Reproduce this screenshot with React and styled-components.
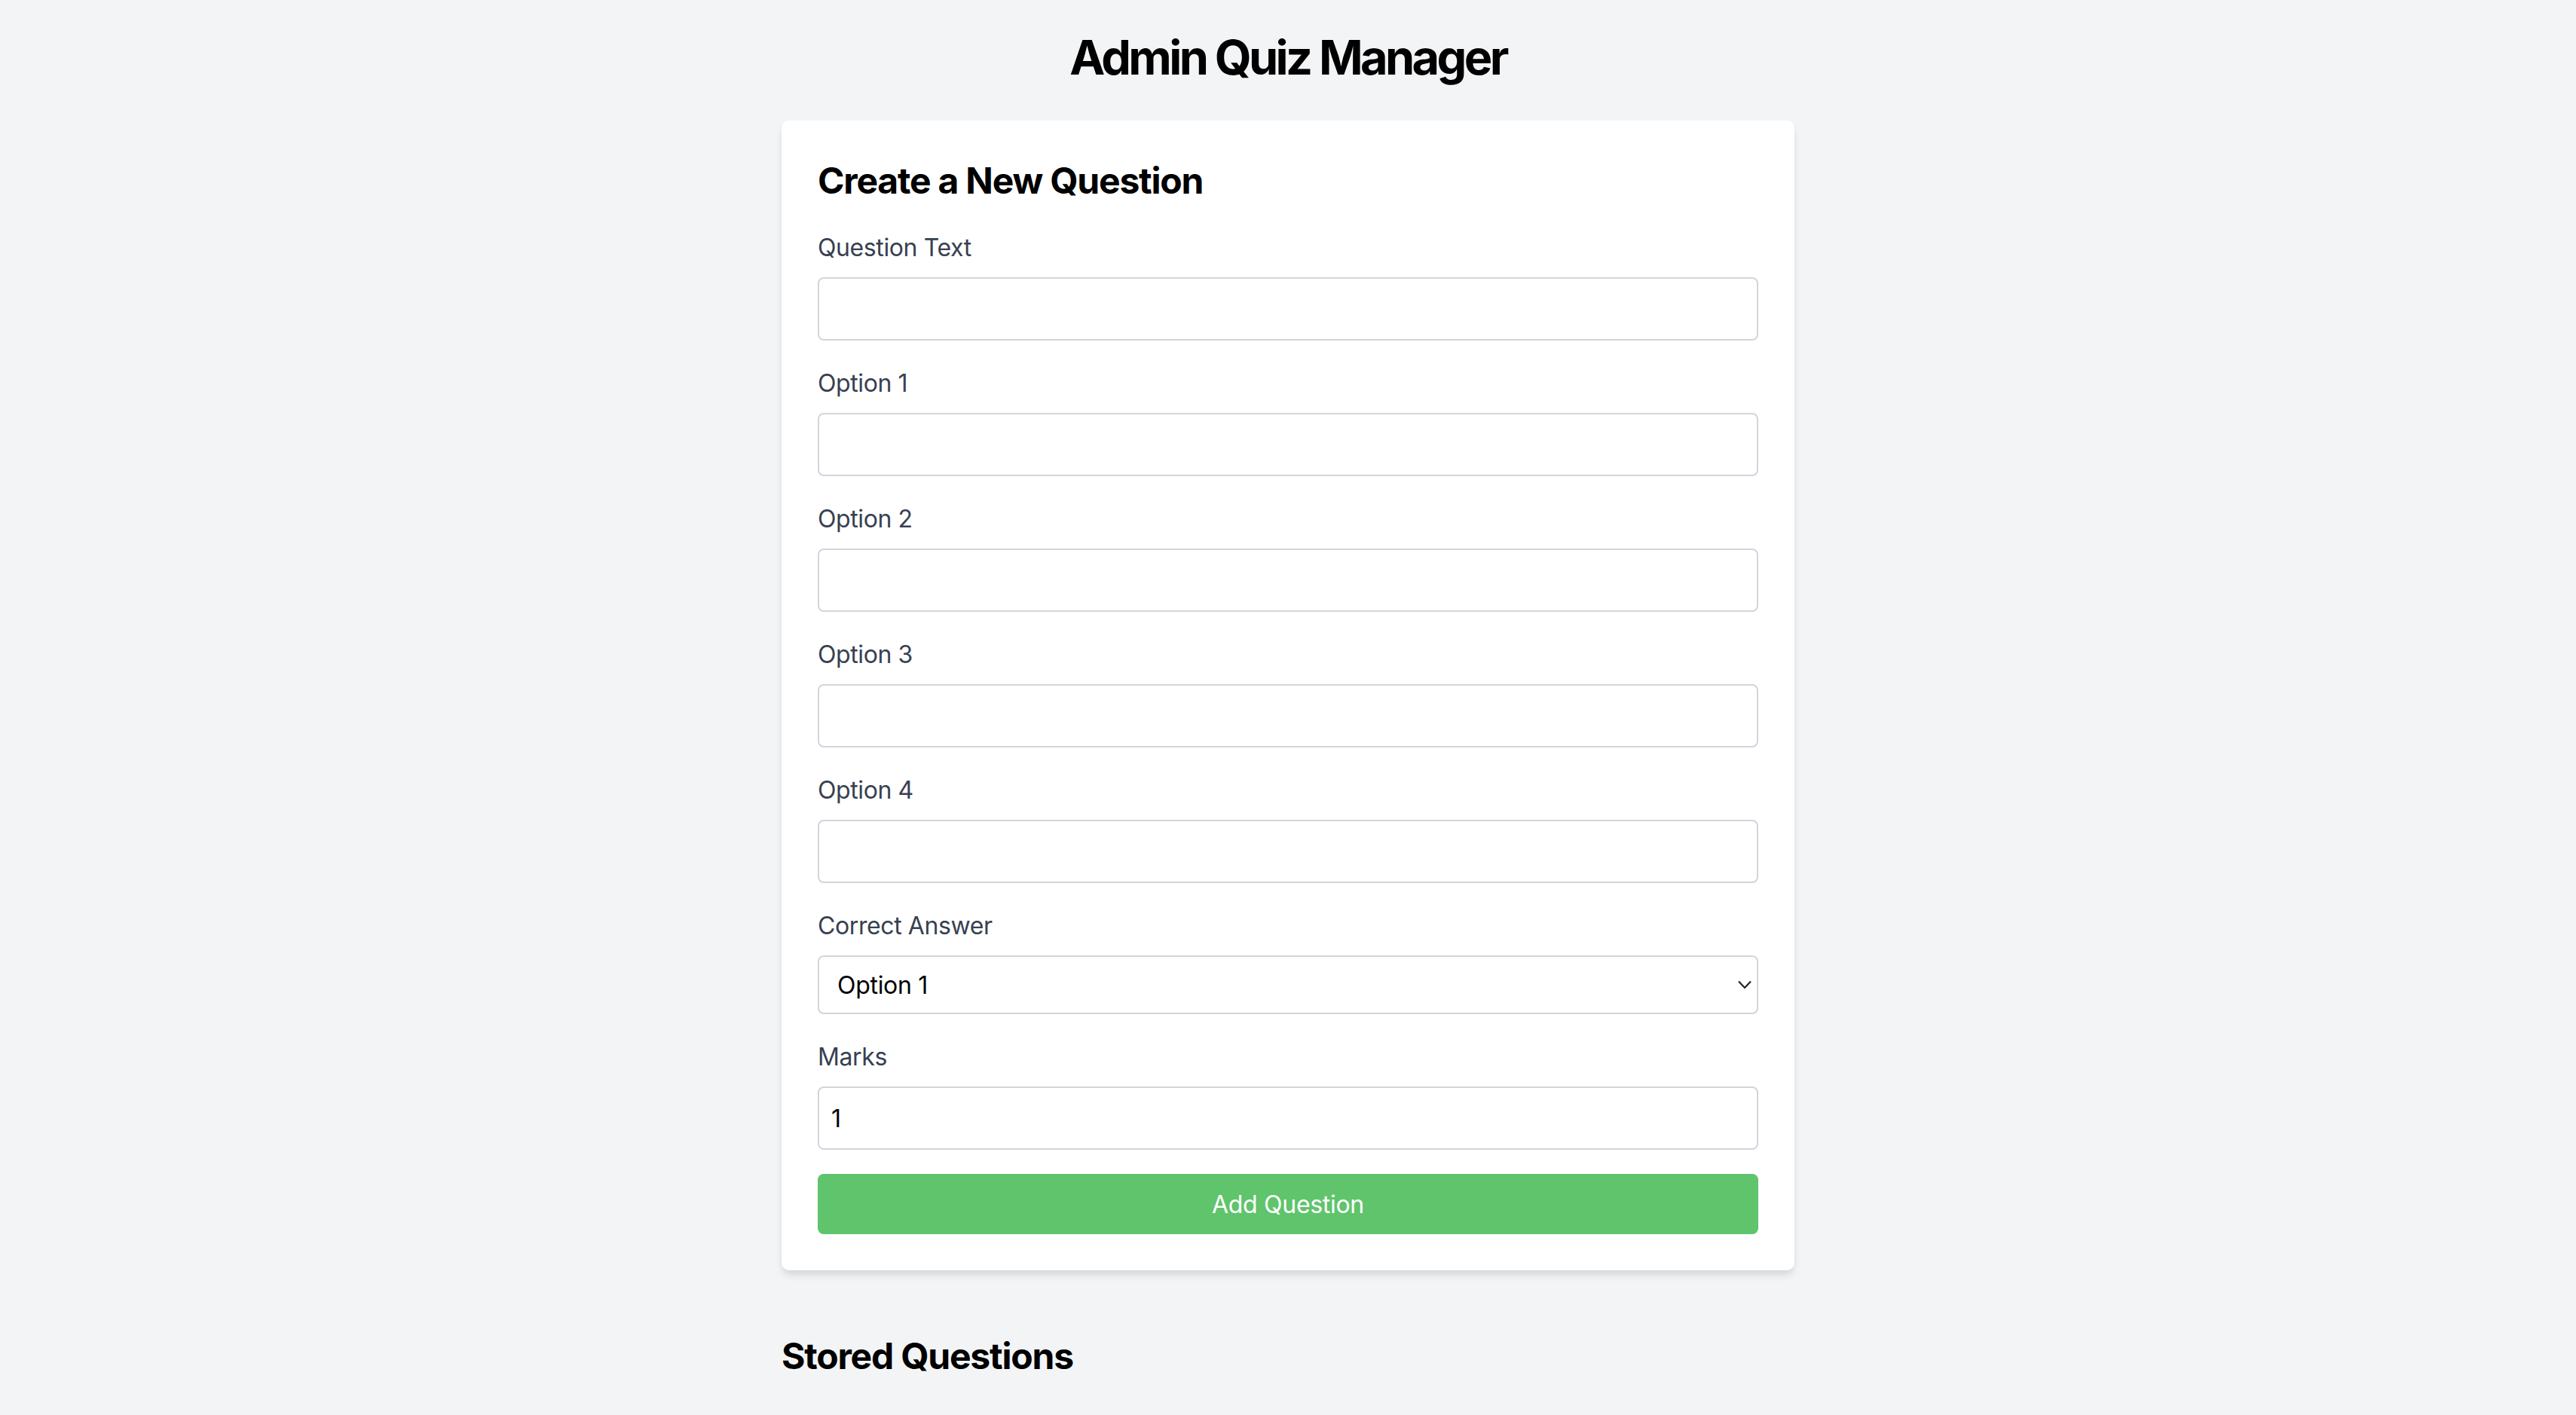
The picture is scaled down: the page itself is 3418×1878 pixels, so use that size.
import styled, { createGlobalStyle } from "styled-components";

const GlobalStyle = createGlobalStyle`
  * {
    box-sizing: border-box;
  }
  body {
    margin: 0;
    background: #f3f4f6;
    font-family: Inter, "Noto Sans", "Liberation Sans", sans-serif;
  }
`;

const Page = styled.div`
  min-height: 100vh;
  padding: 40px 40px 80px;
`;

const Title = styled.h1`
  margin: 0 0 48px;
  font-size: 63px;
  line-height: 72px;
  font-weight: 700;
  text-align: center;
  color: #000;
  letter-spacing: -3.6px;
`;

const Container = styled.div`
  width: 1344px;
  margin: 0 auto;
`;

const Card = styled.form`
  background: #fff;
  padding: 48px;
  border-radius: 10px;
  box-shadow: 0 8px 12px -2px rgba(0, 0, 0, 0.1),
    0 4px 8px -2px rgba(0, 0, 0, 0.06);
`;

const SectionTitle = styled.h2`
  margin: ${(p) => (p.$spaced ? "82px 0 0" : "0 0 32px")};
  font-size: 48px;
  line-height: 64px;
  font-weight: 700;
  color: #000;
  letter-spacing: -1.2px;
`;

const Field = styled.div`
  margin-bottom: 32px;
`;

const Label = styled.label`
  display: block;
  margin-bottom: 16px;
  padding-top: 1px;
  font-size: 32px;
  line-height: 47px;
  color: #374151;
  letter-spacing: -0.4px;
`;

const Input = styled.input`
  display: block;
  width: 100%;
  height: 84px;
  padding: 0 16px;
  border: 2px solid #d1d5db;
  border-radius: 8px;
  background: #fff;
  font-family: inherit;
  font-size: 32px;
  color: #000;
  outline: none;
`;

const SelectWrap = styled.div`
  position: relative;
`;

const Select = styled.select`
  display: block;
  width: 100%;
  height: 78px;
  padding: 0 24px;
  border: 2px solid #d1d5db;
  border-radius: 8px;
  background: #fff;
  font-family: inherit;
  font-size: 32px;
  color: #000;
  letter-spacing: -0.3px;
  appearance: none;
  outline: none;
`;

const Chevron = styled.svg`
  position: absolute;
  right: 9px;
  top: 50%;
  transform: translateY(-50%);
  pointer-events: none;
`;

const SubmitButton = styled.button`
  display: block;
  width: 100%;
  height: 80px;
  border: none;
  border-radius: 8px;
  background: #5fc46b;
  color: #fff;
  font-family: inherit;
  font-size: 32px;
  letter-spacing: -0.3px;
  cursor: pointer;
`;

const textFields = ["Question Text", "Option 1", "Option 2", "Option 3", "Option 4"];

export default function App() {
  return (
    <Page>
      <GlobalStyle />
      <Title>Admin Quiz Manager</Title>
      <Container>
        <Card onSubmit={(e) => e.preventDefault()}>
          <SectionTitle>Create a New Question</SectionTitle>
          {textFields.map((name) => (
            <Field key={name}>
              <Label>{name}</Label>
              <Input type="text" />
            </Field>
          ))}
          <Field>
            <Label>Correct Answer</Label>
            <SelectWrap>
              <Select defaultValue="0">
                <option value="0">Option 1</option>
                <option value="1">Option 2</option>
                <option value="2">Option 3</option>
                <option value="3">Option 4</option>
              </Select>
              <Chevron width="18" height="11" viewBox="0 0 18 11">
                <polyline
                  points="1,1 9,9.5 17,1"
                  fill="none"
                  stroke="#222"
                  strokeWidth="2.2"
                />
              </Chevron>
            </SelectWrap>
          </Field>
          <Field>
            <Label>Marks</Label>
            <Input type="number" defaultValue="1" />
          </Field>
          <SubmitButton type="submit">Add Question</SubmitButton>
        </Card>
        <SectionTitle $spaced>Stored Questions</SectionTitle>
      </Container>
    </Page>
  );
}
